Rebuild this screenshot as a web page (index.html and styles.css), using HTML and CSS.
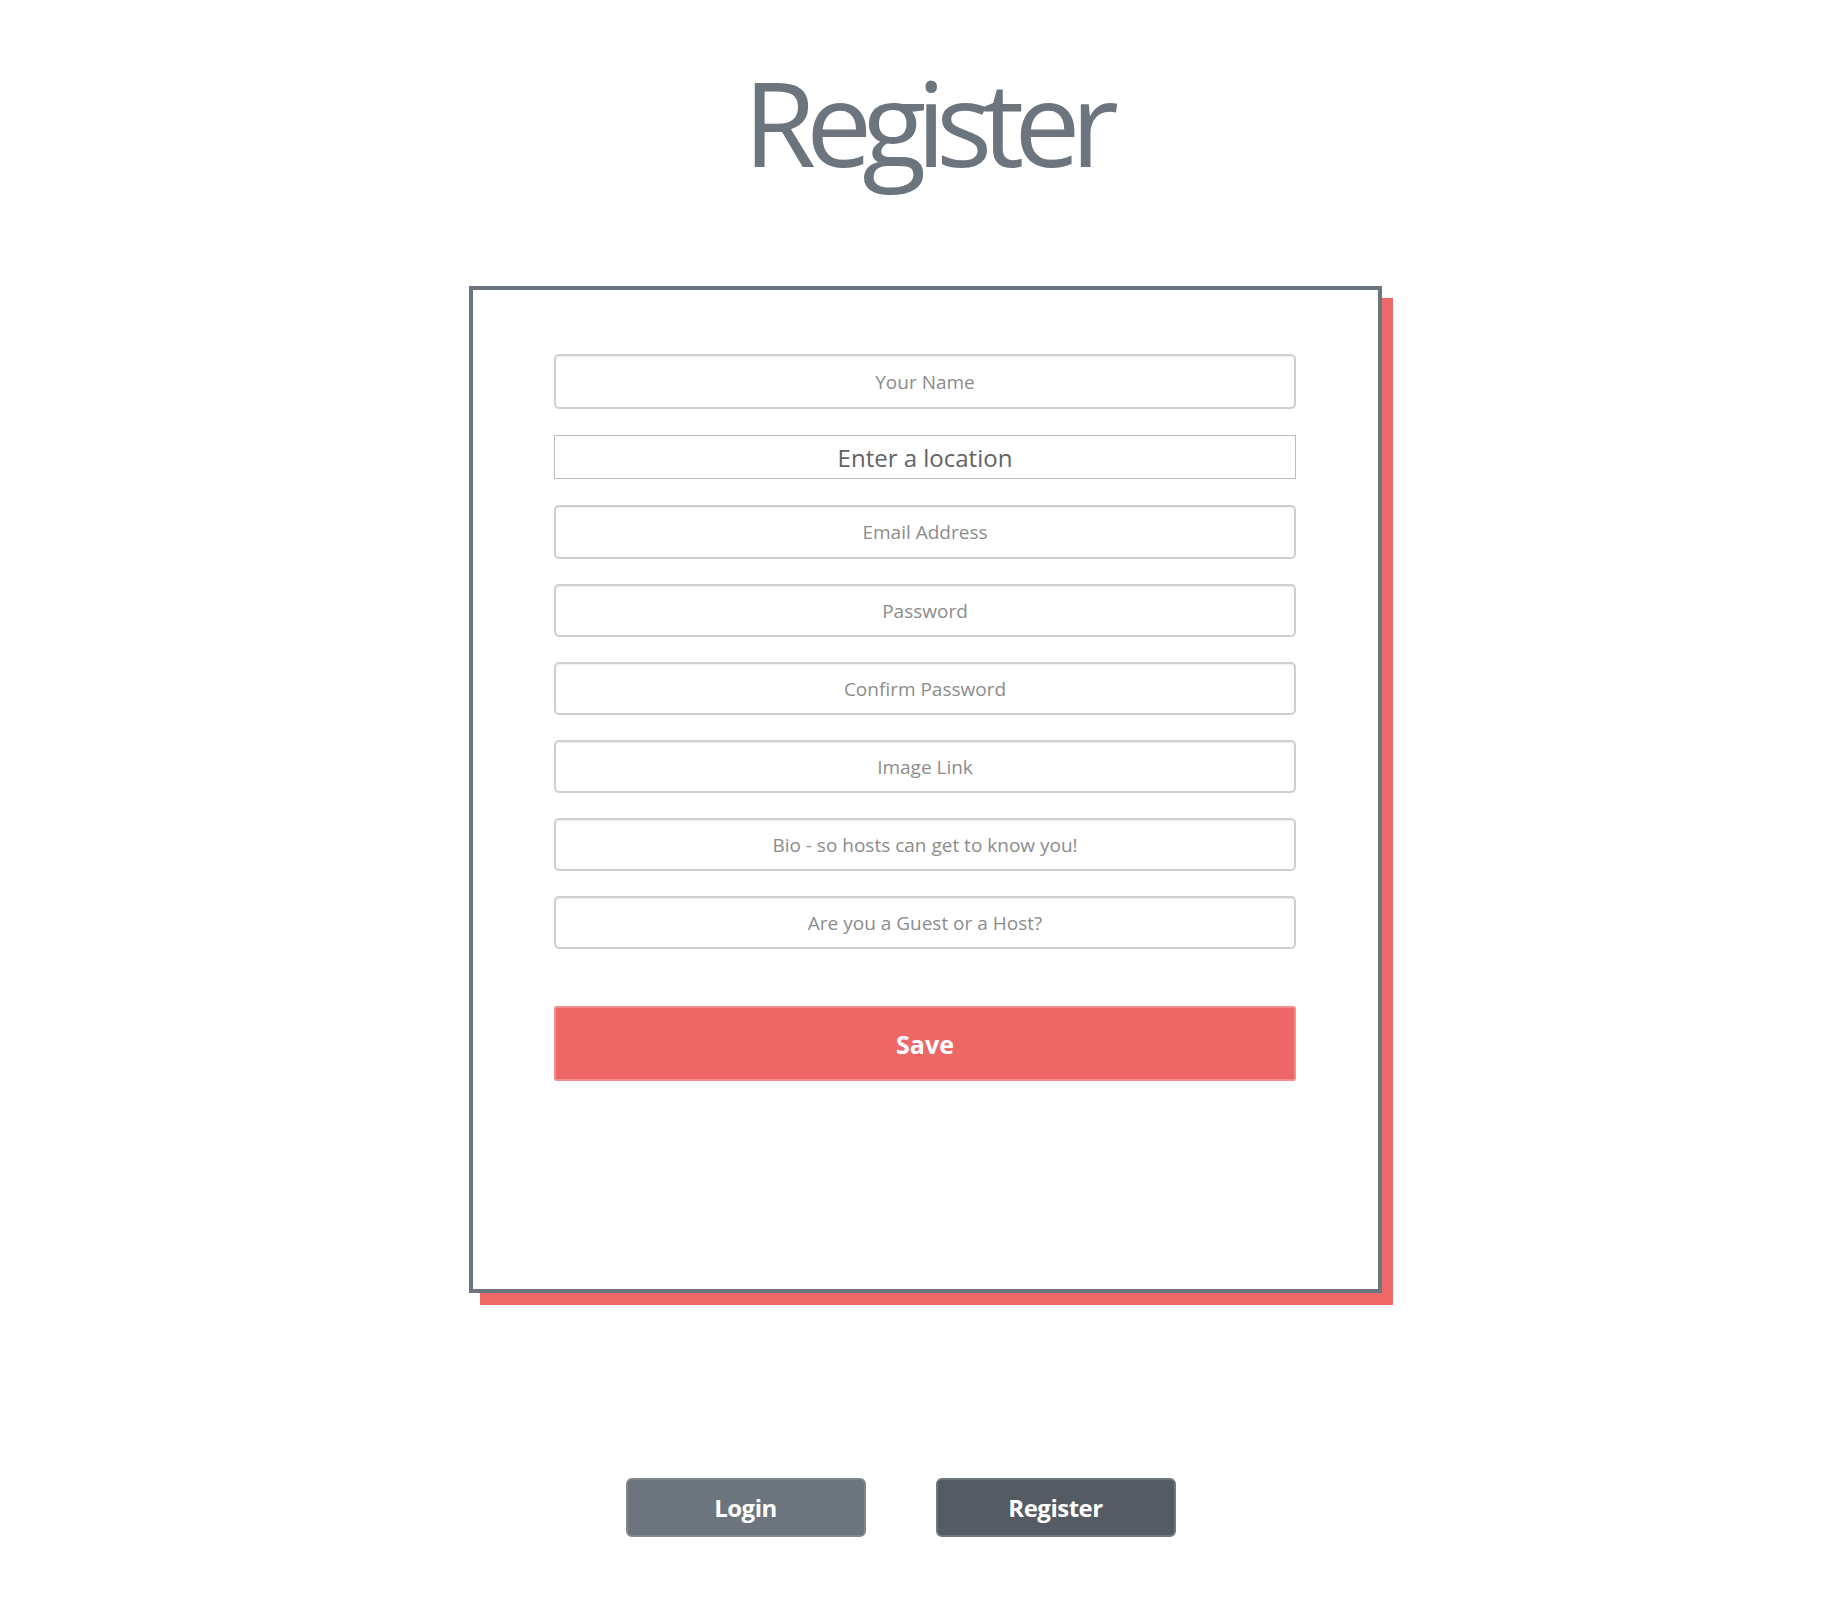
FILE: index.html
```html
<!DOCTYPE html>
<html lang="en">
<head>
<meta charset="utf-8">
<title>Register</title>
<link rel="stylesheet" href="styles.css">
</head>
<body>
  <h1 class="title">Register</h1>
  <div class="card">
    <form class="form">
      <input class="field field-name" type="text" placeholder="Your Name">
      <input class="field-location" type="text" placeholder="Enter a location">
      <input class="field field-email" type="email" placeholder="Email Address">
      <input class="field" type="password" placeholder="Password">
      <input class="field" type="password" placeholder="Confirm Password">
      <input class="field" type="text" placeholder="Image Link">
      <input class="field" type="text" placeholder="Bio - so hosts can get to know you!">
      <input class="field" type="text" placeholder="Are you a Guest or a Host?">
      <button class="save" type="button">Save</button>
    </form>
  </div>
  <div class="nav">
    <button class="nav-btn nav-login" type="button">Login</button>
    <button class="nav-btn nav-register" type="button">Register</button>
  </div>
</body>
</html>
```

FILE: styles.css
```css
html, body {
  margin: 0;
  padding: 0;
  background: #ffffff;
}

body {
  font-family: "Open Sans", "Noto Sans", "Liberation Sans", sans-serif;
  color: #6c757d;
}

.title {
  margin: 0;
  padding: 63px 0 0 12px;
  font-size: 118px;
  line-height: 1;
  font-weight: 400;
  letter-spacing: -10px;
  text-align: center;
  color: #6c757d;
}

.card {
  box-sizing: border-box;
  width: 913px;
  height: 1007px;
  margin: 105px 0 0 calc(50% - 451px);
  border: 4px solid #6c757d;
  background: #fff;
  box-shadow: 11px 12px 0 #ef6868;
  padding: 64px 82px 0 81px;
}

.form {
  display: flex;
  flex-direction: column;
}

.field {
  box-sizing: border-box;
  width: 742px;
  height: 53px;
  margin: 0 0 25px;
  border: 2px solid #cfcfcf;
  border-radius: 5px;
  box-shadow: inset 0 1px 2px rgba(0, 0, 0, 0.07);
  background: #fff;
  font-family: inherit;
  font-size: 19px;
  color: #555;
  text-align: center;
  outline: none;
}

.field::placeholder {
  color: #8c8c8c;
}

.field-name {
  height: 55px;
  margin-bottom: 26px;
}

.field-email {
  height: 54px;
}

.field-location {
  box-sizing: border-box;
  width: 742px;
  height: 44px;
  margin: 0 0 26px;
  border: 1px solid #bdbdbd;
  border-radius: 0;
  background: #fff;
  font-family: inherit;
  font-size: 24px;
  color: #555;
  text-align: center;
  outline: none;
}

.field-location::placeholder {
  color: #636363;
}

.save {
  box-sizing: border-box;
  width: 742px;
  height: 75px;
  margin-top: 32px;
  border: 2px solid #f38c8c;
  border-radius: 3px;
  background: #ee6767;
  color: #fff;
  font-family: inherit;
  font-size: 25px;
  font-weight: 700;
  cursor: pointer;
}

.nav {
  display: flex;
  justify-content: center;
  gap: 70px;
  padding: 185px 39px 0 0;
}

.nav-btn {
  box-sizing: border-box;
  width: 240px;
  height: 59px;
  border-radius: 6px;
  color: #fff;
  font-family: inherit;
  font-size: 24px;
  font-weight: 700;
  letter-spacing: -0.5px;
  cursor: pointer;
}

.nav-login {
  background: #6c757d;
  border: 2px solid #7f878e;
}

.nav-register {
  background: #545b62;
  border: 2px solid #6f777e;
}
```
